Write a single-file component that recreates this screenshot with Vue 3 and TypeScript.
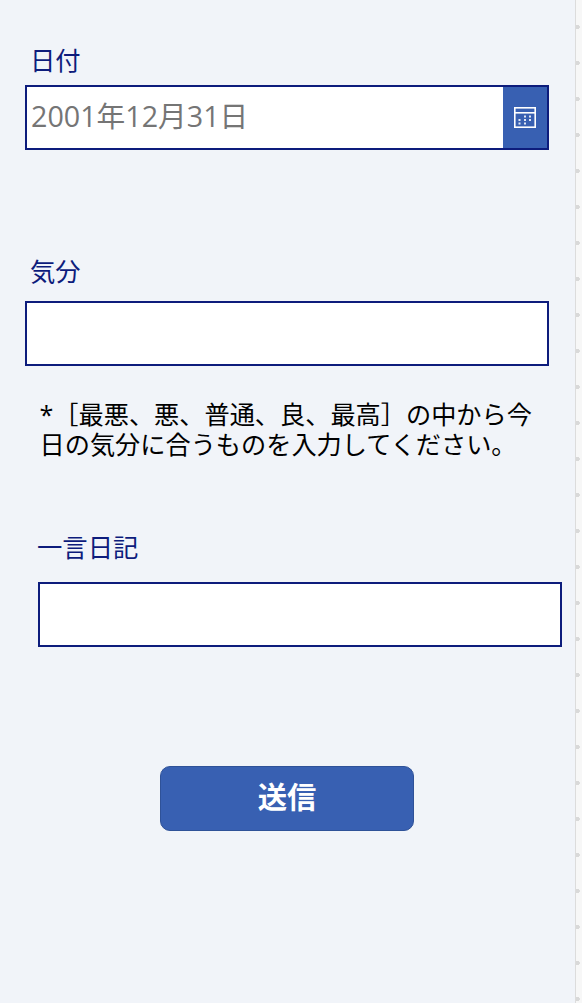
<script setup lang="ts">
const today = '2001年12月31日'
const note = '*［最悪、悪、普通、良、最高］の中から今日の気分に合うものを入力してください。'
const calendarDots: Array<[number, number]> = [
  [10, 8.5], [15, 8.5], [4.5, 12], [10, 12], [15, 12], [4.5, 15.5], [10, 15.5],
]
</script>

<template>
  <div class="screen">
    <form class="form" @submit.prevent>
      <!-- 日付 -->
      <div class="field date-field">
        <label class="label">日付</label>
        <div class="date-box">
          <span class="date-value">{{ today }}</span>
          <span class="date-btn">
            <svg width="22" height="21" viewBox="0 0 22 21" fill="none">
              <rect x="0.8" y="0.8" width="20.4" height="19.4" stroke="#fff" stroke-width="1.6" />
              <line x1="1" y1="5.8" x2="21" y2="5.8" stroke="#fff" stroke-width="1.6" />
              <rect
                v-for="(dot, i) in calendarDots"
                :key="i"
                :x="dot[0]"
                :y="dot[1]"
                width="2"
                height="2"
                fill="#fff"
                opacity="0.85"
              />
            </svg>
          </span>
        </div>
      </div>

      <!-- 気分 -->
      <div class="field mood-field">
        <label class="label">気分</label>
        <input class="text-input" type="text" />
        <p class="note">{{ note }}</p>
      </div>

      <!-- 一言日記 -->
      <div class="field diary-field">
        <label class="label">一言日記</label>
        <input class="text-input" type="text" />
      </div>

      <div class="actions">
        <button class="send-btn" type="submit">送信</button>
      </div>
    </form>
    <div class="scroll-strip"></div>
  </div>
</template>

<style>
html, body {
  margin: 0;
  padding: 0;
  overflow: hidden;
}
</style>

<style scoped>
.screen {
  display: flex;
  width: 582px;
  height: 1003px;
  background: #f1f4f9;
  font-family: "Open Sans", "Noto Sans CJK JP", sans-serif;
  overflow: hidden;
}

.form {
  flex: 1;
  display: flex;
  flex-direction: column;
  min-width: 0;
  box-sizing: border-box;
  padding-top: 42px;
}

.field {
  display: flex;
  flex-direction: column;
  align-items: flex-start;
}

.label {
  font-size: 25.33px;
  line-height: 36px;
  color: #0d1c7c;
  margin-left: 30px;
}

.date-field {
  margin-bottom: 103px;
}

.date-box,
.text-input {
  width: 524px;
  height: 65px;
  margin: 7px 0 0 25px;
  box-sizing: border-box;
  border: 2px solid #0d1c7c;
  background: #fff;
}

.date-box {
  display: flex;
  align-items: center;
}

.date-value {
  flex: 1;
  padding: 0 0 6px 4px;
  font-size: 28.7px;
  color: #757575;
}

.date-btn {
  width: 44px;
  align-self: stretch;
  display: flex;
  align-items: center;
  justify-content: center;
  background: #3860b2;
}

.text-input {
  display: block;
  outline: none;
}

.mood-field .text-input {
  margin-top: 12px;
}

.note {
  width: 500px;
  margin: 33px 0 0 39.5px;
  font-size: 25.2px;
  line-height: 30px;
  color: #000;
}

.diary-field {
  margin-top: 70px;
}

.diary-field .label {
  margin-left: 37px;
}

.diary-field .text-input {
  margin: 17px 0 0 38px;
}

.actions {
  display: flex;
  justify-content: center;
  margin-top: 119px;
  padding-right: 1px;
}

.send-btn {
  width: 254px;
  height: 65px;
  padding: 0 0 7px;
  border: 1px solid #2f5298;
  border-radius: 10px;
  background: #3860b2;
  color: #fff;
  font-family: inherit;
  font-size: 29.33px;
  font-weight: 700;
}

.scroll-strip {
  width: 7px;
  flex: none;
  box-sizing: border-box;
  border-left: 1px solid #dcdcdc;
  background-color: #f7f7f7;
  background-image: radial-gradient(circle at 1.5px 27px, #d9d9d9 2px, transparent 2.5px);
  background-size: 7px 36px;
}
</style>
